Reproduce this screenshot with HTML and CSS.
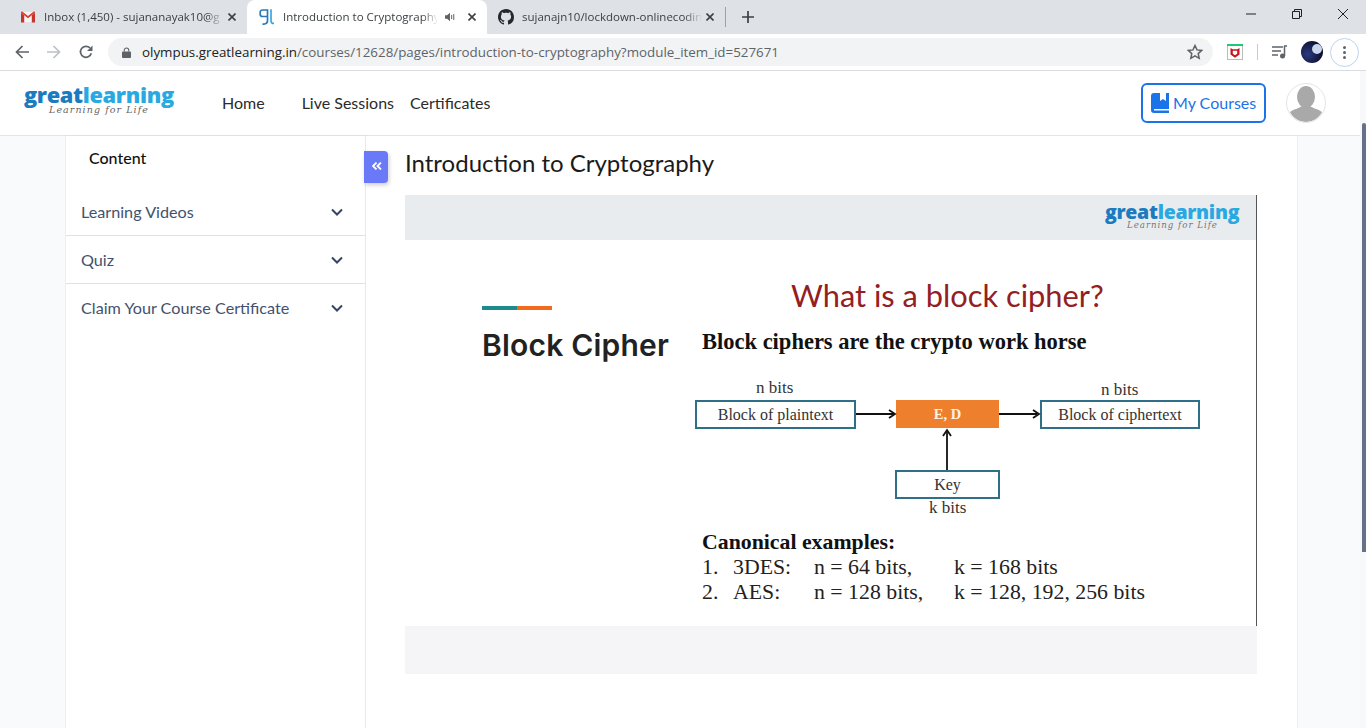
FILE: index.html
```html
<!DOCTYPE html>
<html lang="en">
<head>
<meta charset="utf-8">
<title>Introduction to Cryptography</title>
<link rel="stylesheet" href="styles.css">
</head>
<body>
<div class="tabstrip">
  <div class="tab tab-first">
    <svg class="favicon" viewBox="0 0 16 16"><path d="M1.500 3h13v10h-13z" fill="#f4f4f4"/><path d="M1 13.500V3.800L4.200 6.200v7.300z" fill="#c5372c"/><path d="M15 13.500V3.800l-3.200 2.400v7.300z" fill="#c5372c"/><path d="M1 3.800C1 2.700 2 2.300 2.900 2.900L8 6.900l5.100-4c.9-.6 1.900-.2 1.900.9L8 9.300z" fill="#dc3e30"/></svg>
    <span class="tab-title">Inbox (1,450) - sujananayak10@g</span>
    <svg class="tab-close" viewBox="0 0 8 8"><path d="M.5.5l7 7M7.500.5l-7 7" stroke="#3c4043" stroke-width="1.600"/></svg>
  </div>
  <div class="tab tab-active">
    <svg class="favicon favicon-gl" viewBox="0 0 16 16"><path d="M3.500 1h5v6.500h-5a2.300 2.300 0 0 1-2.300-2.300V3.300A2.300 2.300 0 0 1 3.500 1zM8.500 1v10.800c0 2.400-1.700 3.400-5 3.400" fill="none" stroke="#2b7ab5" stroke-width="1.700"/><path d="M12 .2v11.500c0 1.800.8 2.800 3 2.800" fill="none" stroke="#3aa6dd" stroke-width="1.700"/></svg>
    <span class="tab-title">Introduction to Cryptography</span>
    <svg class="speaker" viewBox="0 0 12 12"><path d="M0 4h2.500L6 1v10L2.500 8H0z" fill="#5f6368"/><path d="M8 3.500v5M10.500 2.500v7" stroke="#5f6368" stroke-width="1.200"/></svg>
    <svg class="tab-close" viewBox="0 0 8 8"><path d="M.5.5l7 7M7.500.5l-7 7" stroke="#3c4043" stroke-width="1.600"/></svg>
  </div>
  <div class="tab tab-third">
    <svg class="favicon" viewBox="0 0 16 16"><path fill="#24292e" d="M8 0C3.580 0 0 3.580 0 8c0 3.540 2.290 6.530 5.470 7.590.4.070.55-.17.55-.38 0-.19-.01-.82-.01-1.490-2.010.37-2.530-.49-2.690-.94-.09-.23-.48-.94-.82-1.130-.28-.15-.68-.52-.01-.53.63-.01 1.080.58 1.230.82.720 1.210 1.870.87 2.330.66.070-.52.280-.87.510-1.070-1.780-.2-3.640-.89-3.640-3.950 0-.87.310-1.590.820-2.150-.08-.2-.36-1.020.08-2.120 0 0 .67-.21 2.200.82.640-.18 1.320-.27 2-.27s1.360.09 2 .27c1.530-1.040 2.200-.82 2.200-.82.440 1.100.160 1.920.080 2.120.51.560.82 1.270.82 2.150 0 3.070-1.870 3.750-3.650 3.950.29.250.54.730.54 1.480 0 1.070-.01 1.930-.01 2.200 0 .21.150.46.550.38A8.010 8.010 0 0 0 16 8c0-4.420-3.580-8-8-8z"/></svg>
    <span class="tab-title">sujanajn10/lockdown-onlinecodin</span>
    <svg class="tab-close" viewBox="0 0 8 8"><path d="M.5.5l7 7M7.500.5l-7 7" stroke="#3c4043" stroke-width="1.600"/></svg>
  </div>
  <span class="tab-sep"></span>
  <svg class="newtab" viewBox="0 0 12 12"><path d="M6 0v12M0 6h12" stroke="#3c4043" stroke-width="1.700"/></svg>
  <div class="winctl">
    <svg viewBox="0 0 10 10"><path d="M0 5h10" stroke="#202124" stroke-width="1"/></svg>
    <svg viewBox="0 0 10 10"><path d="M.5 2.500h7v7h-7zM2.500 2.500v-2h7v7h-2" fill="none" stroke="#202124" stroke-width="1"/></svg>
    <svg viewBox="0 0 10 10"><path d="M0 0l10 10M10 0L0 10" stroke="#202124" stroke-width="1"/></svg>
  </div>
</div>

<div class="toolbar">
  <svg class="navicon" viewBox="0 0 14 14"><path d="M14 7H1.500M7.500 1L1.500 7l6 6" fill="none" stroke="#5f6368" stroke-width="1.700"/></svg>
  <svg class="navicon" viewBox="0 0 14 14"><path d="M0 7h12.500M6.500 1l6 6-6 6" fill="none" stroke="#bdc1c6" stroke-width="1.700"/></svg>
  <svg class="navicon" viewBox="0 0 14 14"><path d="M12.300 8.300A5.500 5.500 0 1 1 11 3" fill="none" stroke="#5f6368" stroke-width="1.700"/><path d="M13.500.5v5.500H8z" fill="#5f6368"/></svg>
  <div class="omnibox">
    <svg class="lock" viewBox="0 0 10 12"><path d="M2.500 5V3.500a2.500 2.500 0 0 1 5 0V5" fill="none" stroke="#5f6368" stroke-width="1.200"/><rect y="5" width="10" height="7" rx="1" fill="#5f6368"/></svg>
    <span class="url"><span class="url-host">olympus.greatlearning.in</span>/courses/12628/pages/introduction-to-cryptography?module_item_id=527671</span>
    <svg class="star" viewBox="0 0 16 16"><path d="M8 1.500l2 4.400 4.800.5-3.600 3.200 1 4.700L8 11.900l-4.200 2.400 1-4.700L1.200 6.400 6 5.900z" fill="none" stroke="#5f6368" stroke-width="1.500"/></svg>
  </div>
  <div class="ext">
    <svg viewBox="0 0 16 16"><rect x=".5" y=".5" width="15" height="15" fill="#fff" stroke="#bbb"/><rect width="16" height="2" fill="#22c772"/><path d="M3.500 4l2.200 1.200h4.600L12.500 4v6.500L8 13.800l-4.500-3.300z" fill="#c5161d"/><path d="M5.800 6.800h4.400v3L8 11.300 5.800 9.800z" fill="#fff"/></svg>
  </div>
  <span class="toolbar-sep"></span>
  <svg class="media" viewBox="0 0 16 14"><path d="M0 2h11M0 6h9M0 10h6" stroke="#5f6368" stroke-width="1.400"/><path d="M12 1h3M12.500 1v10" stroke="#5f6368" stroke-width="1.500"/><circle cx="10.500" cy="11" r="2.500" fill="#5f6368"/></svg>
  <span class="profile"><span class="moon"></span></span>
  <span class="menu"><i></i><i></i><i></i></span>
</div>

<div class="page">
  <header class="site-header">
    <div class="logo">
      <div class="logo-word"><span class="lg-dark">great</span><span class="lg-light">learning</span></div>
      <div class="logo-tag">Learning for Life</div>
    </div>
    <nav class="nav">
      <a class="nav-home">Home</a>
      <a class="nav-live">Live Sessions</a>
      <a>Certificates</a>
    </nav>
    <a class="mycourses">
      <svg viewBox="0 0 18 20"><path d="M3 0h15v20H3a3 3 0 0 1-3-3V3a3 3 0 0 1 3-3z" fill="#1a73e8"/><path d="M9 0h6v8l-3-2-3 2z" fill="#fff"/><path d="M3 16h15v1.500H3z" fill="#fff"/></svg>
      <span class="mc-label">My Courses</span>
    </a>
    <span class="avatar">
      <svg viewBox="0 0 38 38"><ellipse cx="19" cy="13" rx="9" ry="11" fill="#a9a9a9"/><path d="M3 28c4-3 10-4 12-6h8c2 2 8 3 12 6-3 6-9 10-16 10S6 34 3 28z" fill="#a9a9a9"/></svg>
    </span>
  </header>

  <div class="content-wrap">
    <aside class="sidebar">
      <div class="sidebar-title">Content</div>
      <div class="acc-item">
        <span>Learning Videos</span>
        <svg viewBox="0 0 12 8"><path d="M1 1.500l5 5 5-5" fill="none" stroke="#344563" stroke-width="2"/></svg>
      </div>
      <div class="acc-item">
        <span>Quiz</span>
        <svg viewBox="0 0 12 8"><path d="M1 1.500l5 5 5-5" fill="none" stroke="#344563" stroke-width="2"/></svg>
      </div>
      <div class="acc-item acc-last">
        <span>Claim Your Course Certificate</span>
        <svg viewBox="0 0 12 8"><path d="M1 1.500l5 5 5-5" fill="none" stroke="#344563" stroke-width="2"/></svg>
      </div>
    </aside>
    <main class="main">
      <button class="collapse" type="button" aria-label="Collapse">
        <svg viewBox="0 0 10 8"><path d="M4.500.5L1 4l3.500 3.500M9 .5L5.500 4 9 7.500" fill="none" stroke="#fff" stroke-width="1.800"/></svg>
      </button>
      <h1 class="page-title">Introduction to Cryptography</h1>
      <div class="video">
        <div class="slide-head">
          <div class="logo logo-small">
            <div class="logo-word"><span class="lg-dark">great</span><span class="lg-light">learning</span></div>
            <div class="logo-tag">Learning for Life</div>
          </div>
        </div>
        <div class="slide">
          <span class="rule"></span>
          <span class="block-cipher">Block Cipher</span>
          <span class="what">What is a block cipher?</span>
          <span class="sub">Block ciphers are the crypto work horse</span>
          <span class="lbl lbl-n1">n bits</span>
          <span class="lbl lbl-n2">n bits</span>
          <span class="box box-plain">Block of plaintext</span>
          <span class="box box-ed">E, D</span>
          <span class="box box-cipher">Block of ciphertext</span>
          <span class="box box-key">Key</span>
          <span class="lbl lbl-k">k bits</span>
          <svg class="arrows" viewBox="0 0 852 386">
            <path d="M451 174h38M594 174h38M542 230v-38" fill="none" stroke="#111" stroke-width="1.800"/>
            <path d="M484 170l6 4-6 4M628 170l6 4-6 4M538 196l4-6 4 6" fill="none" stroke="#111" stroke-width="1.800"/>
          </svg>
          <div class="examples">
            <div class="ex-title">Canonical examples:</div>
            <div class="ex-row"><span class="c1">1.</span><span class="c2">3DES:</span><span class="c3">n = 64 bits,</span><span>k = 168 bits</span></div>
            <div class="ex-row"><span class="c1">2.</span><span class="c2">AES:</span><span class="c3">n = 128 bits,</span><span>k = 128, 192, 256 bits</span></div>
          </div>
        </div>
        <div class="video-foot"></div>
      </div>
    </main>
  </div>
  <div class="scrollbar"><span class="thumb"></span></div>
</div>
</body>
</html>
```
FILE: styles.css
```css
* { box-sizing: border-box; }
html, body { margin: 0; height: 728px; overflow: hidden; }
body { font-family: Lato, sans-serif; background: #fff; }

/* browser chrome */
.tabstrip { height: 34px; background: #dee1e6; display: flex; align-items: center; font-family: "Open Sans", sans-serif; font-size: 11.500px; color: #3c4043; }
.tab { height: 34px; display: flex; align-items: center; position: relative; }
.tab-first { width: 247px; padding: 0 11px 0 20px; }
.tab-active { width: 240px; padding: 0 11px 0 12px; background: #fff; border-radius: 8px 8px 0 0; }
.tab-third { width: 238px; padding: 0 11px 0 11px; }
.favicon { width: 16px; height: 16px; flex: none; margin-right: 8px; }
.tab-title { flex: 1; min-width: 0; white-space: nowrap; overflow: hidden; padding-bottom: 2px; -webkit-mask-image: linear-gradient(to right, #000 90%, transparent); mask-image: linear-gradient(to right, #000 90%, transparent); }
.speaker { width: 10px; height: 10px; flex: none; margin: 0 13px 0 7px; }
.tab-close { width: 8px; height: 8px; flex: none; margin-left: 4px; }
.speaker + .tab-close { margin-left: 0; }
.tab-sep { width: 1px; height: 20px; background: #9aa0a6; margin: 0 16px 0 0; }
.newtab { width: 12px; height: 12px; }
.winctl { margin-left: auto; display: flex; align-items: center; gap: 36px; padding: 0 18px 6px 0; }
.winctl svg { width: 10px; height: 10px; overflow: visible; }

.toolbar { height: 37px; background: #fff; border-bottom: 1px solid #dadce0; display: flex; align-items: center; padding: 0 7px 0 15px; }
.navicon { width: 14px; height: 14px; flex: none; margin-right: 18px; }
.navicon:nth-child(3) { margin-right: 15px; }
.omnibox { height: 28px; flex: none; width: 1105px; background: #f1f3f4; border-radius: 14px; display: flex; align-items: center; padding: 0 10px 0 14px; font-family: "Open Sans", sans-serif; font-size: 13.370px; color: #5f6368; }
.lock { width: 9px; height: 11px; flex: none; margin-right: 11px; }
.url { flex: 1; white-space: nowrap; }
.url-host { color: #202124; }
.star { width: 16px; height: 16px; flex: none; }
.ext { width: 16px; height: 16px; margin-left: 14px; flex: none; }
.ext svg { display: block; width: 16px; height: 16px; }
.toolbar-sep { width: 1px; height: 16px; background: #c8cacd; margin: 0 14px; }
.media { width: 16px; height: 14px; flex: none; margin-right: 13px; }
.profile { width: 22px; height: 22px; border-radius: 50%; background: radial-gradient(circle at 30% 60%, #2a3a80, #0c1030 70%); position: relative; flex: none; margin-right: 7px; overflow: hidden; }
.moon { position: absolute; right: 1px; top: 3px; width: 10px; height: 10px; border-radius: 50%; background: #c8d6ee; }
.menu { width: 29px; height: 29px; border: 1.500px solid #bcd4f5; border-radius: 50%; display: flex; flex-direction: column; align-items: center; justify-content: center; gap: 2px; flex: none; }
.menu i { width: 3px; height: 3px; border-radius: 50%; background: #5f6368; }

/* page */
.page { position: relative; height: 657px; overflow: hidden; }
.site-header { height: 65px; background: #fff; border-bottom: 1px solid #e3e4e6; display: flex; align-items: center; padding: 0 40px 0 24px; color: #2a2a2a; }
.logo { flex: none; width: 151px; margin-top: -8px; }
.logo-word { font-family: "Open Sans", sans-serif; font-weight: 800; font-size: 21.800px; line-height: 23px; letter-spacing: -.35px; white-space: nowrap; }
.lg-dark { color: #1c7bbf; }
.lg-light { color: #29a9e1; }
.logo-tag { font-family: "DejaVu Serif", serif; font-style: italic; font-size: 9.500px; line-height: 11px; letter-spacing: 1.070px; color: #666; padding-left: 25px; white-space: nowrap; margin-top: -2px; }
.nav { display: flex; margin-left: 47px; padding-bottom: 2px; font-size: 16px; color: #2b2b2b; flex: 1; }
.nav-home { margin-right: 37px; }
.nav-live { margin-right: 16px; }
.mycourses { width: 125px; height: 40px; border: 2px solid #1a73e8; border-radius: 6px; display: flex; align-items: center; padding-left: 8px; gap: 4px; color: #1a73e8; font-size: 16px; white-space: nowrap; }
.mycourses svg { width: 18px; height: 20px; flex: none; }
.mc-label { padding-bottom: 2px; }
.avatar { width: 40px; height: 40px; margin-left: 20px; border-radius: 50%; border: 1px solid #e4e4e4; overflow: hidden; display: block; }
.avatar svg { display: block; width: 38px; height: 38px; }

.content-wrap { height: 592px; background: #f9fafc; padding: 0 69px 0 65px; display: flex; }
.sidebar { width: 301px; flex: none; background: #fff; border-right: 1px solid #e8e9eb; border-left: 1px solid #eceef0; box-shadow: 1px 0 3px rgba(0,0,0,.04); }
.sidebar-title { height: 52px; padding: 12px 0 0 23px; font-size: 16px; font-weight: 500; line-height: 20px; color: #111; }
.acc-item { height: 48px; display: flex; align-items: center; justify-content: space-between; padding: 0 22px 0 15px; border-bottom: 1px solid #dfe1e6; font-size: 16.200px; color: #42526e; }
.acc-last { border-bottom-color: transparent; }
.acc-item svg { width: 12px; height: 8px; flex: none; }
.main { flex: 1; background: #fff; position: relative; padding: 0 40px 0 39px; border-right: 1px solid #eceef0; }
.collapse { position: absolute; left: -2px; top: 15px; width: 24px; height: 32px; border: 0; padding: 0; background: #6979f8; border-radius: 0 4px 4px 0; display: flex; align-items: center; justify-content: center; box-shadow: 1px 2px 4px rgba(0,0,0,.2); }
.collapse svg { width: 10px; height: 8px; margin-left: 2px; margin-bottom: 2px; }
.page-title { margin: 0; height: 59px; padding-top: 11px; font-size: 24px; line-height: 32px; font-weight: 400; color: #1b1b1b; }

/* lecture slide: a free canvas of positioned diagram items */
.video { width: 852px; }
.slide-head { height: 45px; background: #e9ecef; display: flex; justify-content: flex-end; padding: 7px 16px 0 0; border-right: 1px solid #555; }
.logo-small { width: 135px; margin: 0; }
.logo-small .logo-word { font-size: 19.500px; line-height: 20px; letter-spacing: -.3px; }
.logo-small .logo-tag { font-size: 8.700px; letter-spacing: .95px; padding-left: 22px; margin-top: -2px; color: #777; }
.slide { height: 386px; position: relative; background: #fff; border-right: 1px solid #555; font-family: "Liberation Serif", serif; color: #222; }
.rule { position: absolute; left: 77px; top: 66px; width: 70px; height: 4px; background: linear-gradient(to right, #1f8a8c 50%, #f26a1b 50%); }
.block-cipher { position: absolute; left: 77px; top: 85px; font-family: Inter, sans-serif; font-weight: 600; font-size: 30px; line-height: 40px; letter-spacing: .2px; color: #222; white-space: nowrap; }
.what { position: absolute; left: 386px; top: 35px; font-family: Lato, sans-serif; font-size: 30.800px; line-height: 42px; color: #93201f; white-space: nowrap; }
.sub { position: absolute; left: 297px; top: 88px; font-weight: 700; font-size: 22.500px; line-height: 28px; color: #111; white-space: nowrap; }
.lbl { position: absolute; font-size: 17px; line-height: 20px; white-space: nowrap; color: #333; }
.lbl-n1 { left: 351px; top: 138px; }
.lbl-n2 { left: 696px; top: 140px; }
.lbl-k { left: 524px; top: 258px; }
.box { position: absolute; height: 29px; display: flex; align-items: center; justify-content: center; font-size: 16px; border: 2px solid #2f7088; background: #fff; color: #333; white-space: nowrap; }
.box-plain { left: 290px; top: 160px; width: 161px; }
.box-ed { left: 491px; top: 160px; width: 103px; height: 28px; border: 0; background: #ee7f2d; color: #fff3e6; font-weight: 700; font-size: 14.500px; }
.box-cipher { left: 635px; top: 160px; width: 160px; }
.box-key { left: 490px; top: 230px; width: 105px; }
.arrows { position: absolute; left: 0; top: 0; width: 852px; height: 386px; }
.examples { position: absolute; left: 297px; top: 290px; font-size: 21.800px; line-height: 25px; color: #222; white-space: nowrap; }
.ex-title { font-weight: 700; color: #111; }
.ex-row { display: flex; }
.c1 { width: 31px; }
.c2 { width: 81px; }
.c3 { width: 140px; }
.video-foot { height: 48px; background: #f5f5f7; }

.scrollbar { position: absolute; right: 0; top: 0; bottom: 0; width: 6px; background: #f7f8fa; padding-top: 52px; }
.thumb { display: block; width: 4px; margin-left: 2px; height: 429px; background: #667189; border-radius: 2px 2px 0 0; }
```
